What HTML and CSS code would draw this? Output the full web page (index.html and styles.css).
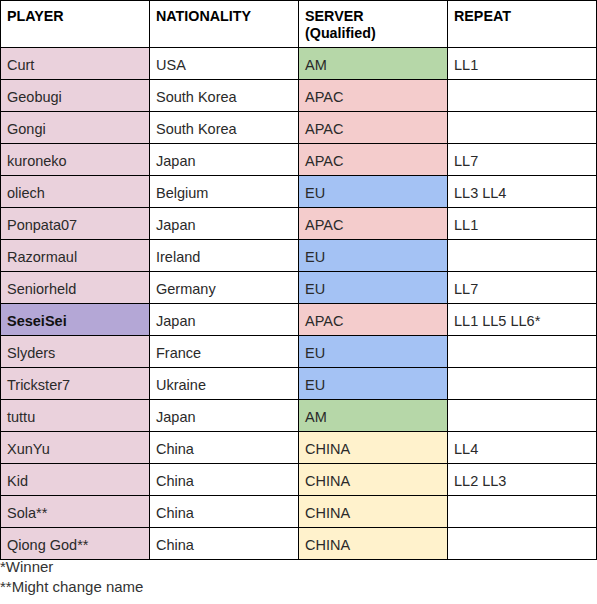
FILE: index.html
```html
<!DOCTYPE html>
<html>
<head>
<meta charset="utf-8">
<link rel="stylesheet" href="styles.css">
</head>
<body>
<table class="roster">
  <colgroup><col class="c"><col class="c"><col class="c"><col class="c"></colgroup>
  <thead>
    <tr><th>PLAYER</th><th>NATIONALITY</th><th>SERVER<br>(Qualified)</th><th>REPEAT</th></tr>
  </thead>
  <tbody>
    <tr><td class="p">Curt</td><td>USA</td><td class="am">AM</td><td>LL1</td></tr>
    <tr><td class="p">Geobugi</td><td>South Korea</td><td class="apac">APAC</td><td></td></tr>
    <tr><td class="p">Gongi</td><td>South Korea</td><td class="apac">APAC</td><td></td></tr>
    <tr><td class="p">kuroneko</td><td>Japan</td><td class="apac">APAC</td><td>LL7</td></tr>
    <tr><td class="p">oliech</td><td>Belgium</td><td class="eu">EU</td><td>LL3 LL4</td></tr>
    <tr><td class="p">Ponpata07</td><td>Japan</td><td class="apac">APAC</td><td>LL1</td></tr>
    <tr><td class="p">Razormaul</td><td>Ireland</td><td class="eu">EU</td><td></td></tr>
    <tr><td class="p">Seniorheld</td><td>Germany</td><td class="eu">EU</td><td>LL7</td></tr>
    <tr><td class="win">SeseiSei</td><td>Japan</td><td class="apac">APAC</td><td>LL1 LL5 LL6*</td></tr>
    <tr><td class="p">Slyders</td><td>France</td><td class="eu">EU</td><td></td></tr>
    <tr><td class="p">Trickster7</td><td>Ukraine</td><td class="eu">EU</td><td></td></tr>
    <tr><td class="p">tuttu</td><td>Japan</td><td class="am">AM</td><td></td></tr>
    <tr><td class="p">XunYu</td><td>China</td><td class="cn">CHINA</td><td>LL4</td></tr>
    <tr><td class="p">Kid</td><td>China</td><td class="cn">CHINA</td><td>LL2 LL3</td></tr>
    <tr><td class="p">Sola**</td><td>China</td><td class="cn">CHINA</td><td></td></tr>
    <tr><td class="p">Qiong God**</td><td>China</td><td class="cn">CHINA</td><td></td></tr>
  </tbody>
</table>
<div class="notes">
  <div class="note">*Winner</div>
  <div class="note">**Might change name</div>
</div>
</body>
</html>
```

FILE: styles.css
```css
html, body {
  margin: 0;
  padding: 0;
  background: #ffffff;
}
body {
  font-family: "Liberation Sans", Arial, sans-serif;
  font-size: 14.5px;
  color: #2a2a2a;
}
.roster {
  border-collapse: collapse;
  table-layout: fixed;
  width: 597px;
}
.roster .c {
  width: 149px;
}
.roster th,
.roster td {
  border: 1px solid #000000;
  padding: 0 6px;
  text-align: left;
  line-height: 17px;
  white-space: nowrap;
  overflow: hidden;
}
.roster th {
  font-weight: bold;
  font-size: 14.3px;
  color: #000000;
  vertical-align: top;
  padding-top: 7px;
  height: 39px;
}
.roster td {
  vertical-align: middle;
  padding-top: 3px;
  height: 28px;
}
.p { background: #ead1dc; }
.win { background: #b4a7d6; font-weight: bold; color: #111111; }
.am { background: #b6d7a8; }
.apac { background: #f4cccc; }
.eu { background: #a4c2f4; }
.cn { background: #fff2cc; }
.note {
  font-size: 15px;
  line-height: 20px;
  color: #333333;
}
.note:first-child {
  margin-top: -3px;
}
```
